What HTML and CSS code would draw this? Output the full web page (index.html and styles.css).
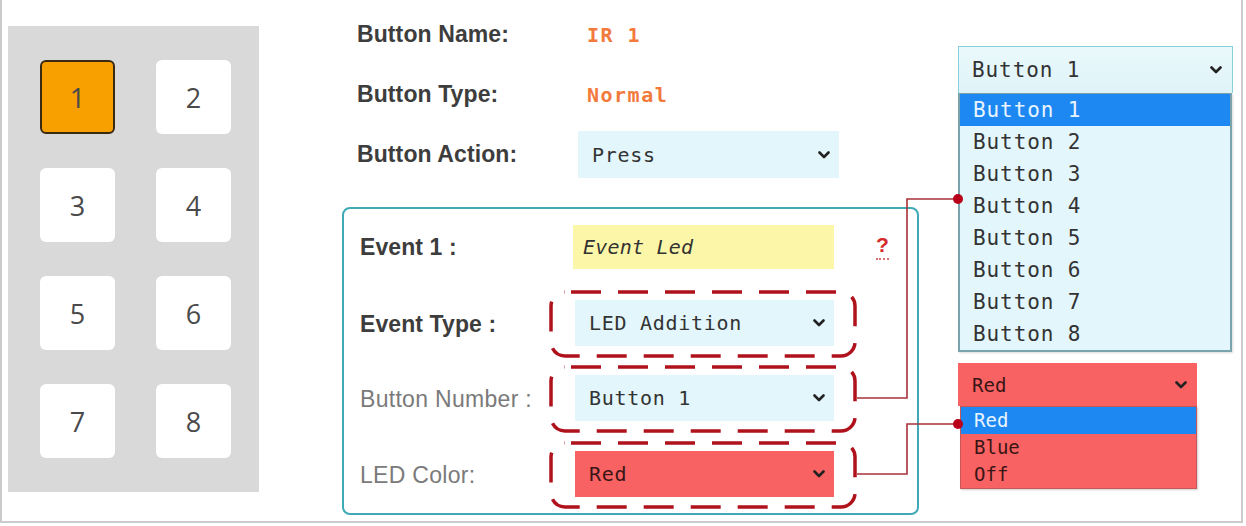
FILE: index.html
```html
<!DOCTYPE html>
<html lang="en">
<head>
<meta charset="UTF-8">
<meta name="viewport" content="width=device-width, initial-scale=1.0">
<title>IR Button Events</title>
<link rel="stylesheet" href="styles.css">
</head>
<body>
<div class="frame">

  <div class="keypad">
    <div class="key active">1</div>
    <div class="key">2</div>
    <div class="key">3</div>
    <div class="key">4</div>
    <div class="key">5</div>
    <div class="key">6</div>
    <div class="key">7</div>
    <div class="key">8</div>
  </div>

  <div class="editor">
    <div class="info-row">
      <span class="label">Button Name:</span>
      <span class="value">IR 1</span>
    </div>
    <div class="info-row">
      <span class="label">Button Type:</span>
      <span class="value">Normal</span>
    </div>
    <div class="info-row">
      <span class="label">Button Action:</span>
      <div class="select action-select">
        <span>Press</span>
        <svg class="chevron" width="12" height="8" viewBox="0 0 12 8"><path d="M1.5 1.5 L6 6 L10.5 1.5" /></svg>
      </div>
    </div>

    <div class="event-box">
      <div class="event-row">
        <span class="label event-label">Event 1 :</span>
        <div class="name-input">Event Led</div>
        <span class="help">?</span>
      </div>

      <div class="dash-row first">
        <span class="label">Event Type :</span>
        <div class="dashed">
          <div class="select">
            <span>LED Addition</span>
            <svg class="chevron" width="12" height="8" viewBox="0 0 12 8"><path d="M1.5 1.5 L6 6 L10.5 1.5" /></svg>
          </div>
        </div>
      </div>

      <div class="dash-row">
        <span class="label light">Button Number :</span>
        <div class="dashed">
          <div class="select">
            <span>Button 1</span>
            <svg class="chevron" width="12" height="8" viewBox="0 0 12 8"><path d="M1.5 1.5 L6 6 L10.5 1.5" /></svg>
          </div>
        </div>
      </div>

      <div class="dash-row last">
        <span class="label light">LED Color:</span>
        <div class="dashed">
          <div class="select red">
            <span>Red</span>
            <svg class="chevron" width="12" height="8" viewBox="0 0 12 8"><path d="M1.5 1.5 L6 6 L10.5 1.5" /></svg>
          </div>
        </div>
      </div>
    </div>
  </div>

  <div class="previews">
    <div class="dropdown buttons-dd">
      <div class="dd-head">
        <span>Button 1</span>
        <svg class="chevron" width="12" height="8" viewBox="0 0 12 8"><path d="M1.5 1.5 L6 6 L10.5 1.5" /></svg>
      </div>
      <ul class="dd-list">
        <li class="picked">Button 1</li>
        <li>Button 2</li>
        <li>Button 3</li>
        <li>Button 4</li>
        <li>Button 5</li>
        <li>Button 6</li>
        <li>Button 7</li>
        <li>Button 8</li>
      </ul>
    </div>

    <div class="dropdown color-dd">
      <div class="dd-head">
        <span>Red</span>
        <svg class="chevron" width="12" height="8" viewBox="0 0 12 8"><path d="M1.5 1.5 L6 6 L10.5 1.5" /></svg>
      </div>
      <ul class="dd-list">
        <li class="picked">Red</li>
        <li>Blue</li>
        <li>Off</li>
      </ul>
    </div>
  </div>

  <!-- callout lines from the dashed fields to their open lists -->
  <svg class="links" width="1246" height="526" viewBox="0 0 1246 526">
    <polyline points="857,398 907,398 907,199 958,199" />
    <polyline points="857,474 907,474 907,424 958,424" />
    <circle cx="958" cy="199" r="5" />
    <circle cx="958" cy="424" r="5" />
  </svg>
</div>
</body>
</html>
```

FILE: styles.css
```css
body {
  margin: 0;
  background-color: #ffffff;
  font-family: "Liberation Sans", Arial, sans-serif;
  color: #3d3d3d;
}
.frame {
  position: relative;
  display: flex;
  align-items: flex-start;
  width: 1243px;
  height: 523px;
  box-sizing: border-box;
  border: 2px solid #cbcbcb;
  border-top: none;
  overflow: hidden;
}

/* keypad */
.keypad {
  margin: 26px 0 0 6px;
  width: 251px;
  height: 466px;
  box-sizing: border-box;
  padding: 34px 0 0 32px;
  background-color: #d9d9d9;
  display: grid;
  grid-template-columns: 75px 75px;
  grid-auto-rows: 74px;
  column-gap: 41px;
  row-gap: 34px;
}
.key {
  background-color: #ffffff;
  border-radius: 6px;
  display: flex;
  align-items: center;
  justify-content: center;
  font-family: "Open Sans", sans-serif;
  font-size: 27px;
  color: #4a4a4a;
}
.key.active {
  background-color: #f8a000;
  border: 2px solid #3b2a12;
}

/* middle editor */
.editor {
  margin-left: 83px;
  width: 577px;
  padding-top: 11px;
}
.info-row {
  display: flex;
  align-items: center;
  height: 47px;
  padding-left: 15px;
  margin-bottom: 13px;
}
.label {
  font-size: 23px;
  font-weight: bold;
  color: #3d3d3d;
  letter-spacing: 0.1px;
}
.info-row .label {
  width: 221px;
  flex-shrink: 0;
}
.label.light {
  font-weight: normal;
  color: #7a7a7a;
  letter-spacing: 0.3px;
}
.value {
  padding-left: 9px;
  font-family: "DejaVu Sans Mono", monospace;
  font-size: 20px;
  font-weight: bold;
  letter-spacing: 1.5px;
  color: #f27a3c;
}

.select {
  display: flex;
  align-items: center;
  justify-content: space-between;
  box-sizing: border-box;
  height: 46px;
  padding: 0 9px 0 14px;
  background-color: #e2f6fb;
  font-family: "DejaVu Sans Mono", monospace;
  font-size: 20px;
  letter-spacing: 0.7px;
  color: #333333;
}
.select.red {
  background-color: #f96262;
  color: #3a1515;
}
.action-select {
  width: 261px;
  height: 47px;
}
.chevron path {
  fill: none;
  stroke: #222222;
  stroke-width: 2.6;
  stroke-linecap: round;
  stroke-linejoin: round;
}

/* event box */
.event-box {
  margin-top: 29px;
  height: 308px;
  box-sizing: border-box;
  border: 2px solid #3fa9b6;
  border-radius: 8px;
  padding: 16px 0 0 16px;
}
.event-row {
  display: flex;
  align-items: center;
  height: 44px;
}
.event-label {
  width: 213px;
  flex-shrink: 0;
}
.name-input {
  width: 261px;
  height: 44px;
  box-sizing: border-box;
  padding: 0 10px;
  display: flex;
  align-items: center;
  background-color: #fcf7a8;
  font-family: "DejaVu Sans Mono", monospace;
  font-style: italic;
  font-size: 20px;
  letter-spacing: 0.2px;
  color: #333333;
}
.help {
  margin-left: 42px;
  font-size: 21px;
  font-weight: bold;
  color: #d42a2a;
  line-height: 1;
  padding-bottom: 3px;
  border-bottom: 2px dotted #d67070;
}
.dash-row {
  display: flex;
  align-items: center;
  margin-top: 7px;
}
.dash-row.first {
  margin-top: 21px;
}
.dash-row.last {
  margin-top: 8px;
}
.dash-row .label {
  width: 189px;
  flex-shrink: 0;
}
.dashed {
  width: 308px;
  height: 68px;
  box-sizing: border-box;
  padding: 10px 23px 12px 26px;
  background-image: url("data:image/svg+xml,%3Csvg xmlns='http://www.w3.org/2000/svg' width='308' height='68'%3E%3Crect x='2' y='2' width='304' height='64' rx='14' fill='none' stroke='%23b0121c' stroke-width='3.5' stroke-dasharray='30 17' stroke-dashoffset='-6'/%3E%3C/svg%3E");
}

/* open dropdown previews */
.previews {
  margin-left: 39px;
  padding-top: 46px;
}
.dropdown {
  font-family: "DejaVu Sans Mono", monospace;
}
.dd-head {
  display: flex;
  align-items: center;
  justify-content: space-between;
  box-sizing: border-box;
}
.dd-list {
  list-style: none;
  margin: 0;
  padding: 0;
}
.buttons-dd {
  width: 275px;
}
.buttons-dd .dd-head {
  height: 47px;
  padding: 0 10px 0 13px;
  border: 1px solid #86cfdc;
  border-bottom: none;
  background: linear-gradient(#eaf9fc, #dff3f8);
  font-size: 21px;
  letter-spacing: 0.9px;
  color: #333333;
}
.buttons-dd .dd-list {
  width: 274px;
  box-sizing: border-box;
  border: 2px solid #7aa3ad;
  border-top-width: 1px;
  background-color: #e3f6fb;
  box-shadow: 1px 1px 2px rgba(0, 0, 0, 0.15);
}
.buttons-dd li {
  height: 32px;
  line-height: 32px;
  padding-left: 13px;
  font-size: 21px;
  letter-spacing: 0.9px;
  color: #333333;
}
.buttons-dd li.picked {
  background-color: #1e88f2;
  color: #e8f4ff;
}

.color-dd {
  width: 239px;
  margin-top: 11px;
}
.color-dd .dd-head {
  height: 43px;
  padding: 0 10px 0 14px;
  background-color: #f96262;
  font-size: 19px;
  color: #3a1515;
}
.color-dd .dd-list {
  width: 237px;
  margin-left: 2px;
  box-sizing: border-box;
  border: 1px solid #c65858;
  background-color: #f96262;
  box-shadow: 1px 1px 2px rgba(0, 0, 0, 0.2);
}
.color-dd li {
  height: 27px;
  line-height: 27px;
  padding-left: 13px;
  font-size: 19px;
  color: #3a1515;
}
.color-dd li.picked {
  background-color: #1e88f2;
  color: #e8f4ff;
}

.links {
  position: absolute;
  left: -2px;
  top: 0;
  pointer-events: none;
}
.links polyline {
  fill: none;
  stroke: #a8323a;
  stroke-width: 1.6;
}
.links circle {
  fill: #b8001a;
}
```
